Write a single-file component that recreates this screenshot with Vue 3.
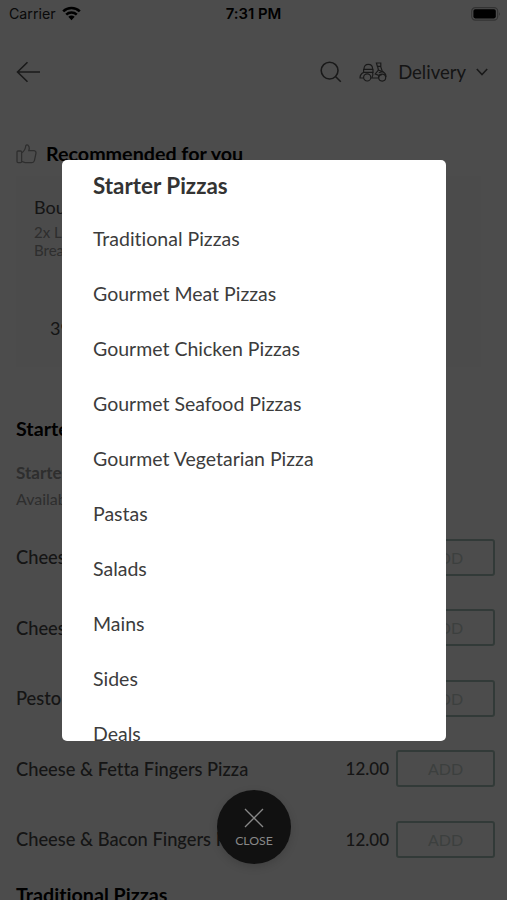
<template>
  <div class="screen">
    <div class="status-bar">
      <div class="carrier">
        <span>Carrier</span>
        <svg width="19" height="15" viewBox="0 0 19 15">
          <g fill="none" stroke="#000" stroke-width="2.6">
            <path d="M1.2 5.4 A12 12 0 0 1 17.8 5.4" />
            <path d="M4.2 8.6 A7.8 7.8 0 0 1 14.8 8.6" />
          </g>
          <path d="M6.3 10.8 Q9.5 8.2 12.7 10.8 L9.5 14.2 Z" />
        </svg>
      </div>
      <span class="time">7:31 PM</span>
      <svg class="battery" width="31" height="14" viewBox="0 0 31 14">
        <rect x="0.7" y="0.7" width="26" height="12.4" rx="3.6" fill="none" stroke="#aaa" stroke-width="1.2" />
        <rect x="2.4" y="2.2" width="22.4" height="9.2" rx="1.8" />
        <path d="M28.3 5 Q30 7 28.3 9 Z" fill="#999" />
      </svg>
    </div>

    <header class="header">
      <svg width="25" height="22" viewBox="0 0 25 22" class="line-icon">
        <path d="M24 11 H1.5 M11.5 1.2 L1.5 11 L11.5 20.8" />
      </svg>
      <div class="header-actions">
        <svg width="22" height="22" viewBox="0 0 22 22" class="line-icon">
          <circle cx="9.6" cy="9.6" r="8.4" />
          <path d="M15.7 15.7 L20.8 20.8" />
        </svg>
        <svg width="28" height="20" viewBox="0 0 28 20" class="line-icon scooter">
          <path d="M5 7.2 Q5 2.4 9.3 2.4 Q13.6 2.4 13.6 7.2 M4.6 7.4 H14 V10.4 H4.6 Z" />
          <path d="M4.8 10.4 Q1 12 1 16 H4.4 M13.6 10.4 Q14.6 13 12.8 16 H19.4 Q19.6 12.8 23 12.6" />
          <path d="M17.4 1 H21.8 V4.4 H18.4 Z M18.6 4.4 L19.4 8 L16.2 12 L19.8 13.4 M21.6 4.4 L23.4 9.6 Q27 10.8 27 15" />
          <path d="M19.4 8 L23.4 9.6 L19.8 10.8" />
          <circle cx="8.2" cy="15.4" r="3.6" />
          <circle cx="23.2" cy="15.6" r="3.5" />
        </svg>
        <span class="delivery">Delivery</span>
        <svg width="12" height="8" viewBox="0 0 12 8" class="line-icon">
          <path d="M0.8 1 L6 6.6 L11.2 1" />
        </svg>
      </div>
    </header>

    <section class="recommended">
      <h2>
        <svg width="21" height="20" viewBox="0 0 21 20" class="thumb">
          <path d="M2 7 H4.6 Q5.6 7 5.6 8 V17.6 Q5.6 18.6 4.6 18.6 H2 Q1 18.6 1 17.6 V8 Q1 7 2 7 Z M5.6 9 Q9.3 6.5 9.8 1.7 Q10.5 0.5 12 1.2 Q14 3 12.8 6.6 H18 Q20.4 7 19.9 9.6 L18.4 16.6 Q17.8 18.6 16 18.6 H9 L5.6 17.4" />
        </svg>
        Recommended for you
      </h2>
      <div class="deal-card">
        <div class="deal-name">Bountiful Deal</div>
        <div class="deal-text">2x Large Pizzas, Garlic<br />Bread</div>
        <div class="deal-price">39.00</div>
      </div>
    </section>

    <section class="menu">
      <h2>Starter Pizzas</h2>
      <h3>Starter Pizzas</h3>
      <p>Available all day</p>
      <div v-for="item in items" :key="item" class="menu-item">
        <span class="item-name">{{ item }}</span>
        <span class="item-price">12.00</span>
        <button>ADD</button>
      </div>
      <h2 class="next-title">Traditional Pizzas</h2>
    </section>

    <div class="overlay"></div>

    <div class="category-modal">
      <ul>
        <li
          v-for="category in categories"
          :key="category"
          :class="{ active: category === selected }"
          @click="selected = category"
        >
          {{ category }}
        </li>
      </ul>
    </div>

    <div class="close-button">
      <svg width="20" height="20" viewBox="0 0 20 20">
        <path d="M1 1 L19 19 M19 1 L1 19" />
      </svg>
      <span>CLOSE</span>
    </div>
  </div>
</template>

<script setup>
import { ref } from 'vue'

const selected = ref('Starter Pizzas')

const categories = [
  'Starter Pizzas',
  'Traditional Pizzas',
  'Gourmet Meat Pizzas',
  'Gourmet Chicken Pizzas',
  'Gourmet Seafood Pizzas',
  'Gourmet Vegetarian Pizza',
  'Pastas',
  'Salads',
  'Mains',
  'Sides',
  'Deals'
]

const items = [
  'Cheese Pizza',
  'Cheese & Garlic Pizza',
  'Pesto Pizza',
  'Cheese & Fetta Fingers Pizza',
  'Cheese & Bacon Fingers Pizza'
]
</script>

<style>
body {
  margin: 0;
}
</style>

<style scoped>
.screen {
  position: relative;
  width: 507px;
  height: 900px;
  overflow: hidden;
  background: #fff;
  color: #484848;
  font-family: Lato, 'Liberation Sans', sans-serif;
  font-variant-ligatures: none;
}
.status-bar {
  display: grid;
  grid-template-columns: 1fr auto 1fr;
  align-items: center;
  height: 28px;
  padding: 0 5px 0 9px;
  font-family: Inter, 'Liberation Sans', sans-serif;
  color: #222;
}
.carrier {
  display: flex;
  align-items: center;
  gap: 6px;
  font-size: 14.2px;
}
.carrier span {
  margin-top: -1px;
}
.carrier svg {
  margin-top: -2px;
}
.time {
  margin-right: 4px;
  font-size: 14.9px;
  font-weight: 600;
  color: #000;
}
.battery {
  justify-self: end;
  margin-top: -1px;
}
.header {
  display: flex;
  align-items: center;
  justify-content: space-between;
  height: 88px;
  padding: 0 19px 0 16px;
}
.header-actions {
  display: flex;
  align-items: center;
}
.line-icon {
  fill: none;
  stroke: #555;
  stroke-width: 1.6;
}
.scooter {
  margin: 0 11px 0 17px;
  stroke-width: 1.2;
}
.delivery {
  margin-right: 10px;
  font-size: 18.5px;
}
h2 {
  margin: 0;
  font-size: 19.7px;
  line-height: 24px;
  color: #000;
}
.recommended {
  padding: 26px 16px 0;
}
.recommended h2 {
  display: flex;
  align-items: center;
  gap: 9px;
}
.thumb {
  fill: none;
  stroke: #999;
  stroke-width: 1.3;
}
.deal-card {
  box-sizing: border-box;
  width: 465px;
  height: 191px;
  margin-top: 10px;
  padding: 20px 18px;
  background: #fafafa;
}
.deal-name {
  font-size: 18px;
  line-height: 22px;
}
.deal-text {
  margin-top: 6px;
  font-size: 15px;
  line-height: 17.5px;
  color: #999;
}
.deal-price {
  margin: 58px 0 0 16px;
  font-size: 18px;
  line-height: 22px;
}
.menu {
  padding: 50px 12px 0 16px;
}
h3 {
  margin: 21px 0 0;
  font-size: 17px;
  line-height: 22px;
  color: #999;
}
.menu p {
  margin: 5px 0 0;
  font-size: 16px;
  line-height: 20px;
  color: #999;
}
.menu-item {
  display: flex;
  align-items: center;
  height: 37px;
  margin-bottom: 33.6px;
  font-size: 18.3px;
}
.menu p + .menu-item {
  margin-top: 29.6px;
}
.item-name {
  flex: 1;
  font-weight: 500;
}
.item-price {
  font-size: 17px;
  font-weight: 500;
}
.menu-item button {
  width: 99px;
  height: 37px;
  margin-left: 7px;
  padding: 0;
  border: 2px solid #a9c4bb;
  border-radius: 3px;
  background: none;
  color: #c9d4d0;
  font-family: inherit;
  font-size: 16px;
}
.next-title {
  margin-top: -9px;
}
.overlay {
  position: absolute;
  inset: 0;
  background: rgba(0, 0, 0, 0.7);
}
.category-modal {
  position: absolute;
  top: 160px;
  left: 62px;
  width: 384px;
  height: 581px;
  overflow: hidden;
  border-radius: 5px;
  background: #fff;
}
.category-modal ul {
  margin: -4px 0 0;
  padding: 0 31px;
  list-style: none;
}
.category-modal li {
  height: 55px;
  font-size: 19.5px;
  line-height: 55px;
  color: #3c3c3c;
}
.category-modal .active {
  font-size: 22.4px;
  line-height: 59px;
  font-weight: bold;
  color: #333;
}
.close-button {
  position: absolute;
  top: 790px;
  left: 217px;
  display: flex;
  flex-direction: column;
  align-items: center;
  box-sizing: border-box;
  width: 74px;
  height: 74px;
  padding-top: 18px;
  border-radius: 50%;
  background: #111;
  box-shadow: 0 3px 8px rgba(0, 0, 0, 0.15);
  color: #888;
}
.close-button svg {
  fill: none;
  stroke: #888;
  stroke-width: 1.3;
}
.close-button span {
  margin-top: 6px;
  font-size: 12.3px;
  line-height: 14px;
}
</style>
